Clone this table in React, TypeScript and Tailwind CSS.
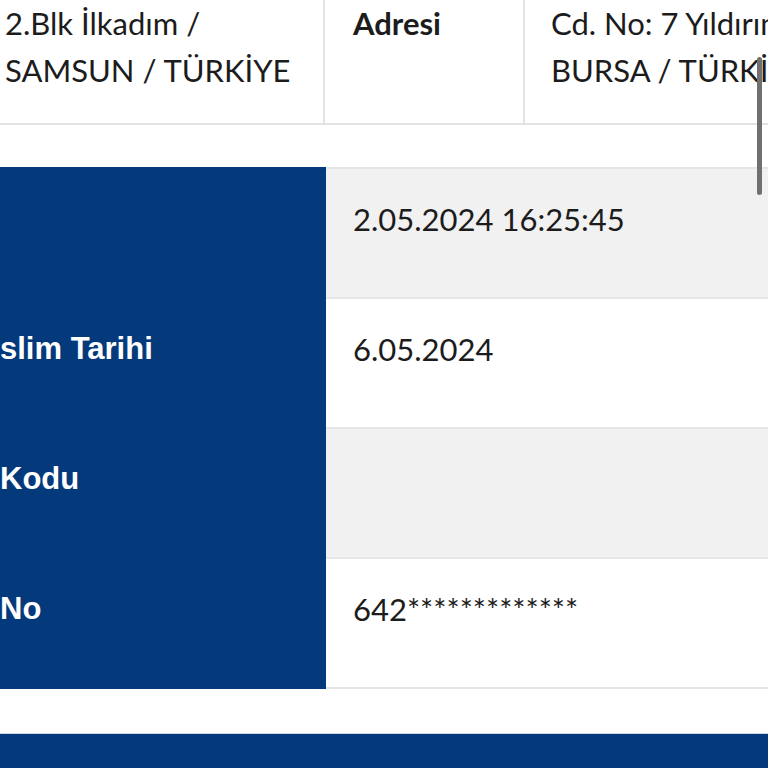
import React from "react";

const rows = [
  { label: "", value: "2.05.2024 16:25:45", bg: "bg-[#f1f1f1]" },
  { label: "slim Tarihi", value: "6.05.2024", bg: "bg-white" },
  { label: "Kodu", value: "", bg: "bg-[#f1f1f1]" },
  { label: "No", value: "642*************", bg: "bg-white" },
];

export default function App() {
  return (
    <div className="relative w-[768px] h-[768px] overflow-hidden bg-white text-[#1c1c1c]" style={{ fontFamily: "Lato, 'Noto Sans', sans-serif" }}>
      {/* top table row */}
      <div className="flex h-[125px] border-b-2 border-[#e3e3e3] text-[31px] leading-[47px]">
        <div className="w-[325px] shrink-0 border-r-2 border-[#e3e3e3] pl-[5px] whitespace-nowrap">
          <div>2.Blk İlkadım /</div>
          <div>SAMSUN / TÜRKİYE</div>
        </div>
        <div className="w-[200px] shrink-0 border-r-2 border-[#e3e3e3] pl-[28px] font-bold">Adresi</div>
        <div className="min-w-0 flex-1 pl-[26px] whitespace-nowrap overflow-hidden">
          <div>Cd. No: 7 Yıldırım /</div>
          <div>BURSA / TÜRKİYE</div>
        </div>
      </div>

      {/* detail table */}
      <div className="mt-[42px] flex">
        <div className="w-[326px] shrink-0 bg-[#043a7b] overflow-hidden" style={{ fontFamily: "'Liberation Sans', Arial, sans-serif" }}>
          {rows.map((r, i) => (
            <div key={i} className="h-[130px] pt-[30px] text-[31px] leading-[44px] font-bold text-white whitespace-nowrap">
              {r.label}
            </div>
          ))}
        </div>
        <div className="flex-1 border-t-2 border-[#e6e6e6]">
          {rows.map((r, i) => (
            <div key={i} className={`h-[130px] ${r.bg} border-b-2 border-[#e6e6e6] pl-[27px] pt-[28px] text-[31px] leading-[44px] whitespace-nowrap`}>
              {r.value}
            </div>
          ))}
        </div>
      </div>

      {/* bottom bar */}
      <div className="mt-[44px] h-[40px] border-t border-[#cfd3e6] bg-[#043a7b]" />

      {/* scroll indicator */}
      <div className="absolute left-[757px] top-[57px] h-[138px] w-[5px] rounded-full bg-[#707070]" />
    </div>
  );
}
